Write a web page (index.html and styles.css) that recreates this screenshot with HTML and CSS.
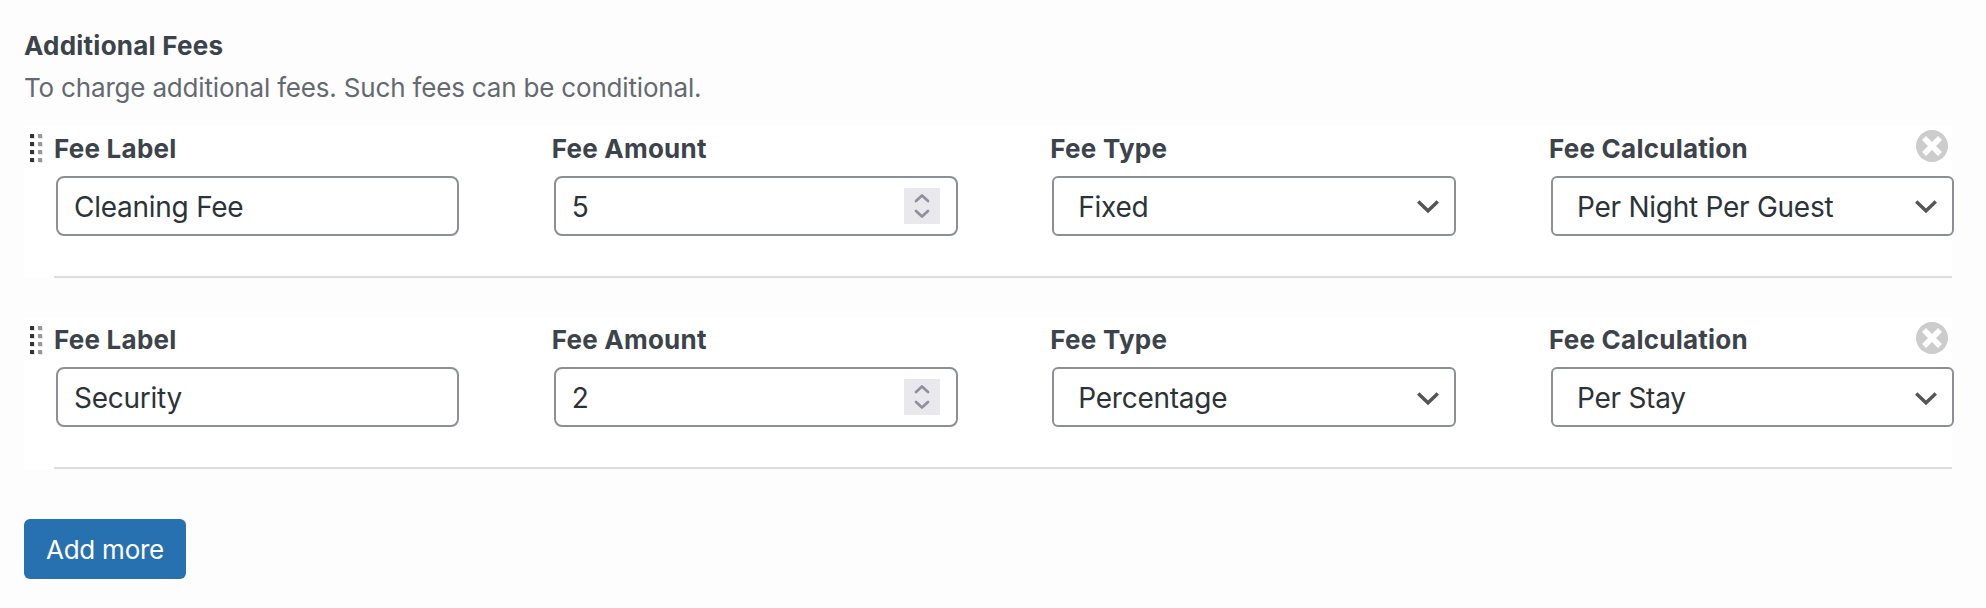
FILE: index.html
```
<!DOCTYPE html>
<html lang="en">
<head>
<meta charset="utf-8">
<title>Additional Fees</title>
<link rel="stylesheet" href="styles.css">
</head>
<body>
<svg class="symbols" width="0" height="0" aria-hidden="true">
  <symbol id="grip" viewBox="0 0 16 32">
    <g fill="#e4e4e4"><path d="M2 2h4v4H2zM10 2h4v4h-4zM2 10h4v4H2zM10 10h4v4h-4zM2 18h4v4H2zM10 18h4v4h-4zM2 26h4v4H2zM10 26h4v4h-4z"/></g>
    <path fill="#333" d="M1 1h4v4H1zM1 9h4v4H1zM1 17h4v4H1zM1 25h4v4H1z"/>
    <path fill="#999" d="M9 1h4v4H9zM9 9h4v4H9zM9 17h4v4H9zM9 25h4v4H9z"/>
  </symbol>
  <symbol id="remove" viewBox="0 0 32 32">
    <circle cx="16" cy="16" r="16" fill="#ccc"/>
    <path d="M8 8l16 16M24 8L8 24" stroke="#fff" stroke-width="5.6"/>
  </symbol>
  <symbol id="chevron" viewBox="0 0 22 14">
    <path d="M1.2 1.6l9.8 9.2 9.8-9.2" fill="none" stroke="#555" stroke-width="3.4"/>
  </symbol>
  <symbol id="spin" viewBox="0 0 36 36">
    <path fill="#e9e8ed" d="M0 0h36v36H0z"/>
    <path d="M12 13l6-5.5 6 5.5M12 23l6 5.5 6-5.5" fill="none" stroke="#8f8f9d" stroke-width="2.7" stroke-linecap="round" stroke-linejoin="round"/>
  </symbol>
</svg>
<main class="fees">
  <h2 class="title">Additional Fees</h2>
  <p class="description">To charge additional fees. Such fees can be conditional.</p>
  <div class="rows">
    <section class="row">
      <svg class="grip"><use href="#grip"/></svg>
      <div class="fields">
        <div class="field"><span class="label">Fee Label</span><div class="control">Cleaning Fee</div></div>
        <div class="field"><span class="label">Fee Amount</span><div class="control number">5<svg class="spin"><use href="#spin"/></svg></div></div>
        <div class="field"><span class="label">Fee Type</span><div class="control select">Fixed<svg class="chevron"><use href="#chevron"/></svg></div></div>
        <div class="field"><span class="label">Fee Calculation</span><div class="control select">Per Night Per Guest<svg class="chevron"><use href="#chevron"/></svg></div></div>
      </div>
      <svg class="remove"><use href="#remove"/></svg>
    </section>
    <section class="row row-last">
      <svg class="grip"><use href="#grip"/></svg>
      <div class="fields">
        <div class="field"><span class="label">Fee Label</span><div class="control">Security</div></div>
        <div class="field"><span class="label">Fee Amount</span><div class="control number">2<svg class="spin"><use href="#spin"/></svg></div></div>
        <div class="field"><span class="label">Fee Type</span><div class="control select">Percentage<svg class="chevron"><use href="#chevron"/></svg></div></div>
        <div class="field"><span class="label">Fee Calculation</span><div class="control select">Per Stay<svg class="chevron"><use href="#chevron"/></svg></div></div>
      </div>
      <svg class="remove"><use href="#remove"/></svg>
    </section>
  </div>
  <button class="add" type="button">Add more</button>
</main>
</body>
</html>
```
FILE: styles.css
```
* { box-sizing: border-box; }
body {
  margin: 0;
  background: #fdfdfd;
  color: #2c3338;
  font-family: Inter, "Liberation Sans", sans-serif;
}
.symbols { position: absolute; }
.fees { padding: 27px 32px 0 24px; }
.title, .label {
  font-size: 26px;
  line-height: 38px;
  font-weight: 700;
  color: #3c434a;
  letter-spacing: 0.24px;
}
.title { margin: 0; }
.description {
  margin: 4px 0 0;
  font-size: 26px;
  line-height: 38px;
  color: #646970;
  letter-spacing: -0.18px;
}
.rows {
  display: grid;
  gap: 40px;
  margin-top: 19px;
}
.row {
  position: relative;
  width: 1928px;
  height: 152px;
  padding: 4px 0 0 30px;
  background: linear-gradient(#dcdcde, #dcdcde) 30px 100% / 100% 2px no-repeat #fff;
}
.row-last { height: 151px; padding-top: 3px; }
.grip {
  position: absolute;
  left: 5px;
  top: 7px;
  width: 16px;
  height: 32px;
}
.remove {
  position: absolute;
  right: 4px;
  top: 4px;
  width: 32px;
  height: 32px;
}
.fields {
  display: grid;
  grid-template-columns: 403px 404px 404px 403px;
  column-gap: 95px;
  justify-content: space-between;
  column-gap: 0;
  margin: 0 -2px 0 2px;
}
.field { display: grid; row-gap: 8px; }
.label { margin-left: -2px; }
.control {
  display: flex;
  align-items: center;
  height: 60px;
  padding: 2px 16px 0;
  border: 2px solid #8c8f94;
  border-radius: 8px;
  background: #fff;
  font-size: 28px;
  line-height: 40px;
  letter-spacing: -0.26px;
}
.number, .select { justify-content: space-between; }
.select { padding: 2px 15px 0 24px; border-radius: 6px; }
.spin { width: 36px; height: 36px; margin-top: -2px; }
.chevron { width: 22px; height: 14px; margin-top: -1px; }
.row-last .chevron { margin-top: 1px; }
.add {
  display: block;
  width: 162px;
  height: 60px;
  margin-top: 50px;
  padding: 2px 0 0;
  border: 0;
  border-radius: 6px;
  background: #2871b0;
  color: #fff;
  font: 26px/58px Inter, "Liberation Sans", sans-serif;
  letter-spacing: -0.24px;
}
```
